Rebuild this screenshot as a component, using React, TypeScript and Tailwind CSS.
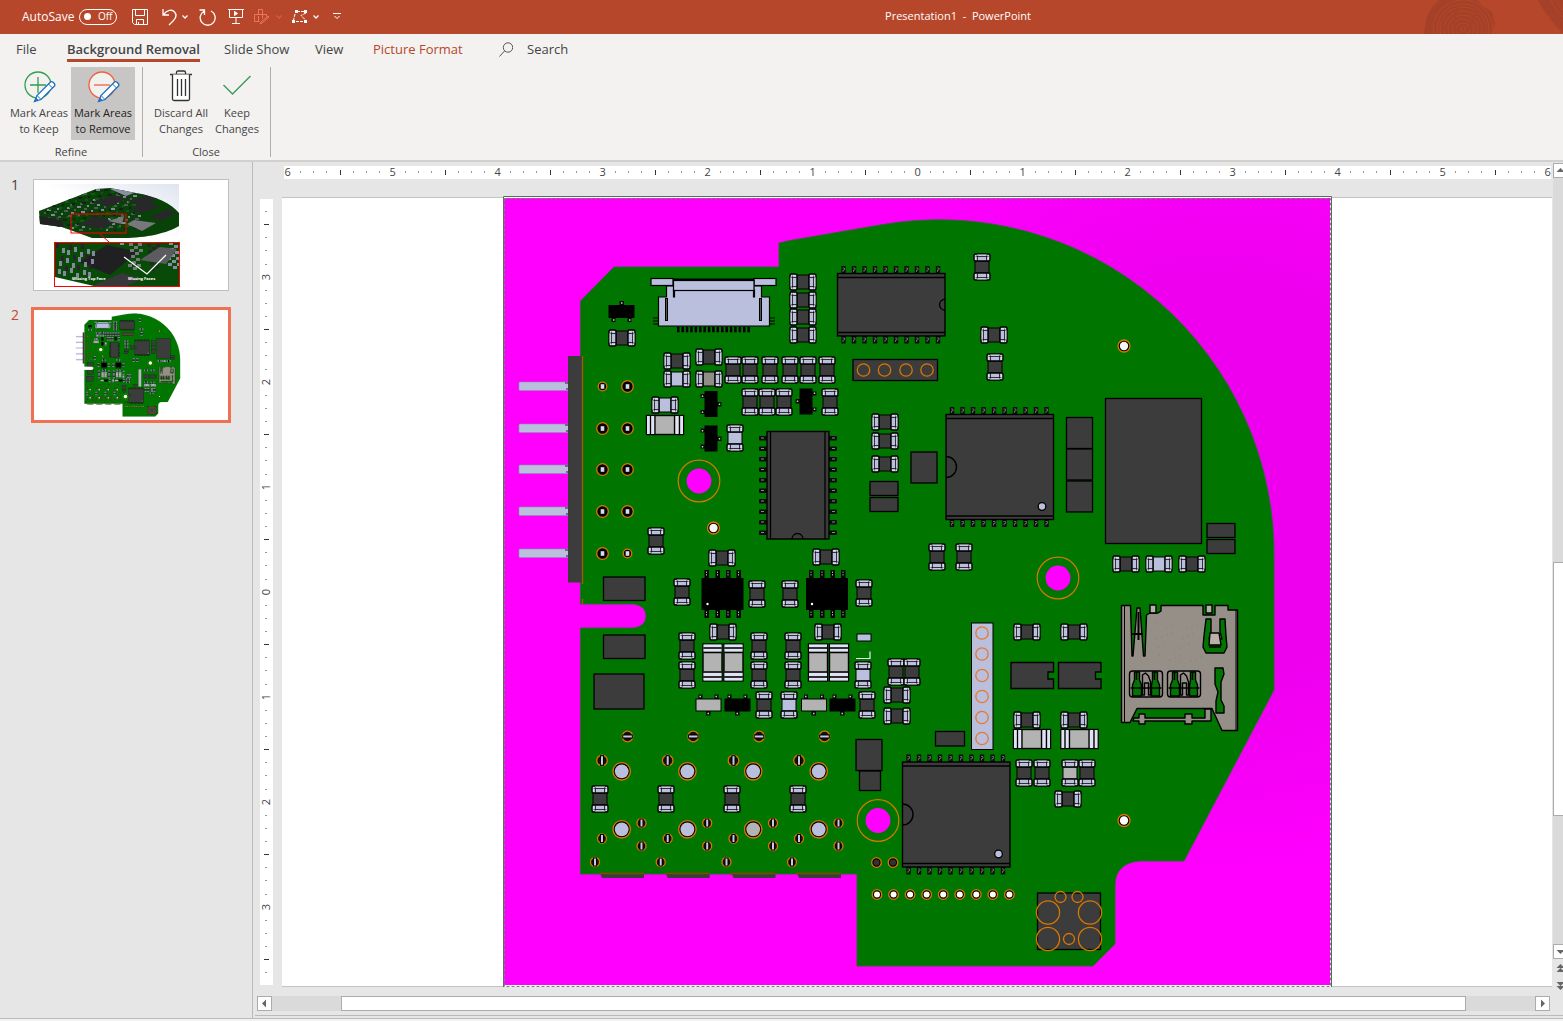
import React from 'react';

type Point = [number, number];

interface PassiveProps {
    x: number;
    y: number;
    vertical?: boolean;
    fill?: string;
}

const DARK = '#3c3c3c';
const PAD = '#b9bfdc';
const GREY = '#b3b3b3';
const ORANGE = '#d97700';
const BOARD = '#007500';

/* ---------- Board parts ---------- */

const horizontalParts: Point[] = [
    [622, 338], [803, 282], [803, 300], [803, 317], [803, 335], [677, 361], [709, 357],
    [994, 335], [885, 422], [885, 441], [885, 464], [722, 558], [826, 557], [723, 632],
    [828, 632], [1126, 564], [1192, 564], [1027, 632], [1074, 632], [897, 695], [897, 716],
    [1027, 720], [1074, 720], [1068, 799],
];

const horizontalLight: Point[] = [[677, 379], [665, 405], [1159, 564]];

const verticalParts: Point[] = [
    [733, 370], [750, 370], [770, 370], [790, 370], [808, 370], [827, 370], [750, 402],
    [767, 402], [784, 402], [830, 402], [982, 267], [995, 367], [656, 541], [682, 592],
    [757, 594], [790, 594], [864, 593], [687, 646], [759, 646], [793, 646], [687, 675],
    [759, 675], [793, 675], [764, 705], [867, 705], [937, 557], [964, 557], [896, 672],
    [912, 672], [1024, 773], [1042, 773], [1087, 773], [600, 799], [666, 799], [732, 799],
    [798, 799],
];

const verticalLight: Point[] = [[735, 438], [863, 675], [789, 705]];

// x, y, width, height
const blocks: [number, number, number, number][] = [
    [1105.5, 398.5, 96, 145], [1066.5, 417.5, 26, 31], [1066.5, 449, 26, 31],
    [1066.5, 481, 26, 31], [911, 452, 26, 31], [870, 481.5, 28, 14], [870, 497.5, 28, 14],
    [1207, 523.5, 28, 14], [1207, 539.5, 28, 14], [603.5, 577, 41.5, 23.5],
    [603.5, 635, 41.5, 23.5], [594, 674, 50, 35], [856, 739.5, 26, 31], [859.5, 771, 21, 19.5],
    [935.5, 731.5, 29, 14.5], [853, 359.5, 84.5, 21], [1037.5, 893, 63, 56.5],
];

const Passive: React.FC<PassiveProps> = ({ x, y, vertical, fill = DARK }) => (
    <g transform={`translate(${x} ${y})${vertical ? ' rotate(90)' : ''}`}>
        <rect x={-6} y={-7} width={12} height={14} fill={fill} stroke="#000" />
        {[-13, 6].map((px) => (
            <g key={px}>
                <rect x={px} y={-8} width={7} height={16} rx={1.5} fill={PAD} stroke="#000" strokeWidth={1.4} />
                <path d={`M${px + (px < 0 ? 2.4 : 4.6)} -7v14M${px} -4.6h7M${px} 4.6h7`} stroke="#111" strokeWidth={0.9} />
                <path d={`M${px + 1} -6.2h5M${px + 1} 6.2h5M${px < 0 ? -12 : 12} -5v10`} stroke="#f4f5fd" strokeWidth={0.8} />
            </g>
        ))}
    </g>
);

const BigCap: React.FC<PassiveProps> = ({ x, y, vertical }) => (
    <g transform={`translate(${x} ${y})${vertical ? ' rotate(90)' : ''}`}>
        <rect x={-18.5} y={-9.5} width={37} height={19} fill={GREY} stroke="#000" strokeWidth={1.4} />
        <path d="M-16.5 -9v18M-12.5 -9v18M12 -9v18M16.5 -9v18" stroke="#dfe3f5" strokeWidth={3} />
        <path d="M-14.5 -9v18M-10 -9v18M9.5 -9v18M14.5 -9v18" stroke="#000" strokeWidth={1.3} />
    </g>
);

const PinRow: React.FC<{ x: number; y: number }> = ({ x, y }) => (
    <>
        {Array.from({ length: 10 }, (_, i) => (
            <g key={i}>
                <rect x={x + i * 10.5 - 2.2} y={y} width={4.4} height={7.5} fill="#0c0c0c" />
                <path d={`M${x + i * 10.5 - 1} ${y + 2}h2v2h-1.5v2`} fill="none" stroke="#888" strokeWidth={0.7} />
            </g>
        ))}
    </>
);

const WideChip: React.FC<{ x: number; y: number; h: number; dot?: Point }> = ({ x, y, h, dot }) => (
    <g>
        <PinRow x={x + 6} y={y - 7.5} />
        <PinRow x={x + 6} y={y + h} />
        <rect x={x} y={y} width={107.5} height={h} fill={DARK} stroke="#000" strokeWidth={1.4} />
        <path d={`M${x} ${y + 4}h107.5M${x} ${y + h - 3.5}h107.5`} stroke="#000" strokeWidth={1.3} />
        {dot ? (
            <>
                <path d={`M${x} ${y + h / 2 - 10.5}a10.5 10.5 0 0 1 0 21`} fill="none" stroke="#000" strokeWidth={1.4} />
                <circle cx={dot[0]} cy={dot[1]} r={3.8} fill={PAD} stroke="#000" strokeWidth={1.3} />
            </>
        ) : (
            <path d={`M${x + 107.5} ${y + h / 2 - 5.5}a5.5 5.5 0 0 0 0 11`} fill="none" stroke="#000" strokeWidth={1.3} />
        )}
    </g>
);

const TallChip = () => (
    <g>
        {Array.from({ length: 10 }, (_, i) => (
            <g key={i}>
                <rect x={759} y={436 + i * 10.5} width={8} height={4.4} rx={1} fill="#0c0c0c" />
                <rect x={829} y={436 + i * 10.5} width={8} height={4.4} rx={1} fill="#0c0c0c" />
                <path d={`M761 ${438 + i * 10.5}h3M832 ${438 + i * 10.5}h3`} stroke="#888" />
            </g>
        ))}
        <rect x={767} y={431.5} width={62} height={107.5} fill={DARK} stroke="#000" strokeWidth={1.4} />
        <path d="M770.5 432v107M825 432v107M792 539a5.5 5.5 0 0 1 11 0" fill="none" stroke="#000" strokeWidth={1.3} />
    </g>
);

const DriverChip: React.FC<{ x: number }> = ({ x }) => (
    <g>
        {[5, 16, 26.5, 37].map((dx) => (
            <g key={dx}>
                <rect x={x + dx - 2} y={570} width={4.5} height={8} fill="#050505" />
                <rect x={x + dx - 2} y={610} width={4.5} height={8} fill="#050505" />
                <path d={`M${x + dx} 571.5v5M${x + dx} 611.5v5`} stroke="#aaa" strokeDasharray="1.5 1" />
            </g>
        ))}
        <rect x={x} y={578} width={42} height={32} fill="#000" />
        <circle cx={x + 6} cy={604} r={1.2} fill="#fff" />
    </g>
);

const Transistor: React.FC<{ x: number; y: number; turn: number; fill?: string }> = ({ x, y, turn, fill = '#000' }) => (
    <g transform={`translate(${x} ${y}) rotate(${turn})`}>
        <rect x={-2} y={-10.5} width={4.5} height={5} fill="#0a0a0a" />
        <rect x={-10} y={5} width={4} height={5.5} fill="#0a0a0a" />
        <rect x={6} y={5} width={4} height={5.5} fill="#0a0a0a" />
        <path d="M-.5 -8.5h1.5M-8.5 8.5h1.5M7.5 8.5h1.5" stroke="#ccc" strokeWidth={1.4} />
        <rect x={-12.5} y={-6} width={25} height={12} fill={fill} stroke="#000" />
    </g>
);

const Via: React.FC<{ x: number; y: number; r: number; fill: string }> = ({ x, y, r, fill }) => (
    <g>
        <circle cx={x} cy={y} r={r} fill="#000" stroke={ORANGE} strokeWidth={1.3} />
        <circle cx={x} cy={y} r={r - 1.8} fill={fill} />
    </g>
);

const SlotVia: React.FC<{ x: number; y: number; r?: number; flat?: boolean }> = ({ x, y, r = 4.5, flat }) => (
    <g transform={`translate(${x} ${y})${flat ? ' rotate(90)' : ''}`}>
        <circle r={r} fill="#101010" stroke={ORANGE} strokeWidth={1.3} />
        <path d={`M0 ${-r}v${r * 2}`} stroke="#000" strokeWidth={4} />
        <path d={`M0 ${1 - r}v${r * 2 - 2}`} stroke="#c5c9e2" strokeWidth={2} />
    </g>
);

const RibbonConnector = () => (
    <g stroke="#000" strokeWidth={1.2}>
        <path d="M677 329.5h74" strokeWidth={5.5} strokeDasharray="2.5 1.9" />
        <path d="M653 318h8v6h-8M775 318h-8v6h8M653 321h8M767 321h8" fill="none" />
        <path d="M658.5 326V297h8v-11h8v11h-1v-7h81v7h-1v-11h8v11h8v29z" fill={PAD} />
        <rect x={651} y={278.5} width={22} height={7} fill={PAD} />
        <rect x={754} y={278.5} width={22} height={7} fill={PAD} />
        <rect x={673.5} y={280.5} width={80.5} height={10} fill={PAD} />
        <path d="M673 279.5h81" strokeWidth={2} />
        <path d="M666.5 298v23M760.5 298v23" strokeWidth={3} />
        <path d="M666.5 299v21M760.5 299v21" stroke="#555" strokeWidth={1} />
    </g>
);

const CardSocket = () => (
    <g stroke="#000" strokeWidth={1.4} strokeLinejoin="round">
        <path
            fill="#968f88"
            d="M1121.5 605.5H1130.5L1132 656H1133L1137 608H1140L1143.5 656H1145L1146.5 615 1150 613H1158L1161 611V605.5H1203V615H1215V605.5H1228V610H1237.5V730.5H1222L1212 708.5H1137L1130 722.5H1121.5Z"
        />
        <path d="M1124.5 606v116M1236 610v120" strokeWidth={1} />
        <path d="M1134 718h5v-4h6v4h40v-4h7v4h13v-9h6v12h-19v3h-7v-3h-40v3h-6v-3h-6z" fill="#968f88" />
        <path d="M1138.5 612v28M1132 634h11" fill="none" strokeWidth={2} />
        <path d="M1150 605h6v8h-6zM1206 605h6v8h-6z" fill="#b8b2a8" />
        <path d="M1206 619h5v13l-2 7h13l-2-7v-13h5l1 17 1 11-3 6h-18l-3-6 1-11z" fill={BOARD} />
        <path d="M1210 633h9l2 12h-12zM1209 647h12" fill="#b8b2a8" />
        <path d="M1215 668h8l1 6-3 8v18l3 6v7h-8v-12l2-9-3-8z" fill={BOARD} />
        {[1129.5, 1167.5].map((x) => (
            <g key={x} transform={`translate(${x} 671)`}>
                <rect width={33} height={26} rx={3} fill="#968f88" />
                <path d="M5 1h5v8l2 5v11H3V14l2-5zM23 1h5v8l2 5v11h-8V14l1-5z" fill={BOARD} />
                <path d="M13 4l3-2 3 3 2 6v13h-2V12h-4v12h-2zM1 17h31M7 1v8M25 1v8" fill="none" />
            </g>
        ))}
        {Array.from({ length: 28 }, (_, i) => (
            <circle key={i} cx={1155 + ((i * 17) % 47)} cy={622 + ((i * 11) % 43)} r={0.5} fill="#777" stroke="none" />
        ))}
    </g>
);

const Board: React.FC<{ hole?: string }> = ({ hole = '#f0f' }) => (
    <g>
        <path
            fill={BOARD}
            stroke="#35613b"
            strokeWidth={1}
            d="M580.5 301 614 267H779V243L790 240.5 880 225A335 335 0 0 1 1274 562V690L1184 861H1140Q1115 863 1115 886V944L1093 966H857V874H580.5V628H634Q646 626 646 616T634 604H580.5Z"
        />

        {/* Pin header on the left edge */}
        {[386, 428, 469, 511, 553].map((y) => (
            <g key={y}>
                <rect x={519} y={y - 4} width={50} height={8.5} rx={1} fill={PAD} stroke="#8a8fb0" strokeWidth={0.6} />
                <path d={`M565 ${y - 3}h4v6h-3`} fill="none" stroke="#222" />
                {[602.5, 627.5].map((x) => {
                    const small = (y === 386 && x < 610) || (y === 553 && x > 610);
                    return (
                        <g key={x}>
                            <circle cx={x} cy={y + 0.5} r={small ? 4.3 : 5.8} fill="#000" stroke={ORANGE} strokeWidth={1.3} />
                            <rect x={x - 1.8} y={y - 1.8} width={3.6} height={4.6} fill="#d9dcef" />
                        </g>
                    );
                })}
            </g>
        ))}
        <rect x={568} y={356} width={14} height={226.5} fill={DARK} />
        <path d="M582.5 356v228M582.5 599v5" stroke="#a85a00" strokeWidth={1.3} />

        {blocks.map(([x, y, w, h]) => (
            <rect key={`${x}-${y}`} x={x} y={y} width={w} height={h} fill={DARK} stroke="#000" strokeWidth={1.3} />
        ))}
        {[1011, 1058.5].map((x) => (
            <path
                key={x}
                d={`M${x} 662.5h42.5v9.5h-5.5v7h5.5v9.5h-42.5z`}
                fill={DARK}
                stroke="#000"
                strokeWidth={1.3}
            />
        ))}

        <WideChip x={837.5} y={273.5} h={62.5} />
        <WideChip x={946} y={414.5} h={105} dot={[1042, 506.5]} />
        <WideChip x={902.5} y={762} h={105} dot={[998.5, 854]} />
        <TallChip />
        <DriverChip x={701.5} />
        <DriverChip x={806} />
        <RibbonConnector />
        <CardSocket />

        {horizontalParts.map(([x, y]) => <Passive key={`h${x}-${y}`} x={x} y={y} />)}
        {horizontalLight.map(([x, y]) => <Passive key={`hl${x}-${y}`} x={x} y={y} fill={PAD} />)}
        {verticalParts.map(([x, y]) => <Passive key={`v${x}-${y}`} x={x} y={y} vertical />)}
        {verticalLight.map(([x, y]) => <Passive key={`vl${x}-${y}`} x={x} y={y} vertical fill={PAD} />)}
        <Passive x={709} y={379} fill="#8f8f88" />
        <Passive x={1070} y={773} vertical fill={GREY} />
        <rect x={857} y={634} width={14} height={7} fill={PAD} stroke="#000" />
        <path d="M856 658.5h14v-7" fill="none" stroke="#e9ebf7" strokeWidth={1.2} />

        <BigCap x={665} y={425} />
        <BigCap x={1032} y={739} />
        <BigCap x={1079.5} y={739} />
        <BigCap x={712.5} y={662.5} vertical />
        <BigCap x={733.5} y={662.5} vertical />
        <BigCap x={818} y={662.5} vertical />
        <BigCap x={839} y={662.5} vertical />

        <Transistor x={621.5} y={311.5} turn={0} />
        <Transistor x={711} y={404} turn={90} />
        <Transistor x={711} y={438.5} turn={90} />
        <Transistor x={806} y={401.5} turn={-90} />
        <Transistor x={708.5} y={705} turn={180} fill={GREY} />
        <Transistor x={737.5} y={705} turn={180} />
        <Transistor x={814} y={705} turn={180} fill={GREY} />
        <Transistor x={842.5} y={705} turn={180} />

        <rect x={971.5} y={623} width={21.5} height={126.5} fill={PAD} stroke="#000" />
        <g fill="none" stroke="#e8782a" strokeWidth={1.3}>
            {[633, 654, 675.5, 696.5, 717.5, 738.5].map((y) => <circle key={y} cx={982} cy={y} r={6.2} />)}
        </g>
        <g fill="none" stroke={ORANGE} strokeWidth={1.3}>
            {[863.5, 884.5, 906, 927].map((x) => <circle key={x} cx={x} cy={370} r={6.2} />)}
            {[1048, 1090].map((x) => (
                <g key={x}>
                    <circle cx={x} cy={912.5} r={11.6} />
                    <circle cx={x} cy={939} r={11.6} />
                </g>
            ))}
            <circle cx={1060.5} cy={897} r={5.5} />
            <circle cx={1077.5} cy={897} r={5.5} />
            <circle cx={1069} cy={939} r={5.5} />
        </g>

        {/* Mounting holes */}
        {[[699, 481], [1058, 578], [878, 820.5]].map(([x, y]) => (
            <g key={x}>
                <circle cx={x} cy={y} r={20.8} fill="none" stroke={ORANGE} strokeWidth={1.2} />
                <circle cx={x} cy={y} r={12.4} fill={hole} />
            </g>
        ))}

        <Via x={1124} y={346} r={6} fill="#f4f4f4" />
        <Via x={713.5} y={528} r={6} fill="#f4f4f4" />
        <Via x={1124} y={820.5} r={6} fill="#fff" />
        <Via x={876.5} y={862.5} r={4.8} fill="#333" />
        <Via x={893} y={862.5} r={4.8} fill="#333" />
        {Array.from({ length: 9 }, (_, i) => <Via key={i} x={877 + i * 16.55} y={894.5} r={4.8} fill="#fff" />)}

        {[0, 65.7, 131.5, 197].map((dx) => (
            <g key={dx}>
                <SlotVia x={627.5 + dx} y={736.5} r={5.3} flat />
                <SlotVia x={602 + dx} y={760.5} r={5.3} />
                <Via x={621.7 + dx} y={771.3} r={8.7} fill={PAD} />
                <Via x={621.7 + dx} y={829.3} r={8.7} fill={dx === 131.5 ? GREY : PAD} />
                <SlotVia x={641.5 + dx} y={823} />
                <SlotVia x={602 + dx} y={838.5} />
                <SlotVia x={641.5 + dx} y={846} />
                <SlotVia x={595 + dx} y={862} />
                <path d={`M${600 + dx} 873h44v5h-42z`} fill={DARK} />
                <path d={`M${599 + dx} 873.5h45`} stroke="#8a4400" strokeWidth={1.5} />
            </g>
        ))}
    </g>
);

/* ---------- Thumbnail of the first slide ---------- */

const IsoBoard = () => (
    <svg viewBox="0 0 194 110" className="block h-full w-full" aria-hidden="true">
        <defs>
            <clipPath id="iso-shape">
                <path d="M5 31 62 9 76 8 102 13C122 16 138 24 145 33V46C134 53 112 58 90 58H58L28 47 6 44Z" />
            </clipPath>
            <clipPath id="iso-zoom">
                <path d="M21 62H145V106H60L21 97Z" />
            </clipPath>
            <linearGradient id="iso-sky" x1="0" y1="1" x2="1" y2="0">
                <stop offset="0.5" stopColor="#fff" />
                <stop offset="1" stopColor="#dfe4ef" />
            </linearGradient>
        </defs>
        <rect x={5} y={4} width={140} height={57} fill="url(#iso-sky)" />
        <g clipPath="url(#iso-shape)">
            <rect width={194} height={110} fill="#084208" />
            {Array.from({ length: 190 }, (_, i) => (
                <rect
                    key={i}
                    x={8 + ((i * 37) % 97)}
                    y={9 + ((i * 23) % 41)}
                    width={2 + (i % 3)}
                    height={2}
                    fill={['#85869a', '#1c1c1f', '#55565f', '#0b5c0b'][i % 4]}
                />
            ))}
            <path d="M5 36 28 40 30 50 5 46Z" fill="#222" />
            <path d="M60 21 80 15 93 19 74 27ZM93 22 112 15 123 19 106 26ZM96 29 114 22 125 27 108 33ZM46 44 62 36 82 42 66 49ZM116 37 134 29 142 33 126 41Z" fill="#28282b" />
            <path d="M76 9 88 7 100 13 92 16Z" fill="#8b8da5" />
            <path d="M93 44 100 40 122 43 108 51ZM74 41 90 36 88 44Z" fill="#77777c" />
        </g>
        <rect x={37} y={34} width={55} height={19} fill="none" stroke="#f00" />
        <path d="M66 54 75 62" stroke="#f00" />
        <g clipPath="url(#iso-zoom)">
            <rect x={21} y={62} width={124} height={45} fill="#084b08" />
            <path d="M45 82 73 65 104 72 76 95Z" fill="#202022" />
            {Array.from({ length: 27 }, (_, i) => (
                <rect
                    key={i}
                    x={22 + ((i * 11) % 37)}
                    y={63 + ((i * 7) % 31)}
                    width={3}
                    height={5}
                    fill={i % 3 ? '#85889c' : '#262629'}
                />
            ))}
            {Array.from({ length: 36 }, (_, i) => (
                <rect
                    key={i}
                    x={86 + ((i * 19) % 58)}
                    y={62 + ((i * 7) % 27)}
                    width={4}
                    height={3}
                    fill={['#898ca3', '#77777f', '#262629'][i % 3]}
                />
            ))}
            <path d="M106 80 126 67 143 69 132 84Z" fill="#5c5c60" />
            <path d="M58 106 88 93 108 99 90 107Z" fill="#38383b" />
        </g>
        <rect x={20.5} y={62.5} width={125} height={44} fill="none" stroke="#f00" />
        <path d="M90 77 113 94 132 75" fill="none" stroke="#fff" strokeWidth={1.2} />
        <g fill="#fff" fontSize={4} fontWeight={700}>
            <text x={38} y={99.5}>Missing Top Face</text>
            <text x={94} y={99.5}>Missing Faces</text>
        </g>
    </svg>
);

/* ---------- Toolbar icons ---------- */

const SaveIcon = () => (
    <svg width={16} height={16} viewBox="0 0 16 16" fill="none" stroke="#fff" aria-hidden="true">
        <path d="M.5 .5h15v15H2.5l-2-2zM3.5 .5v6h9v-6M4.5 15.5v-5h7v5M6.5 13v2.5" />
    </svg>
);

const UndoIcon = () => (
    <svg width={16} height={18} viewBox="0 0 16 18" fill="none" stroke="#fff" strokeWidth={1.3} aria-hidden="true">
        <path d="M1 1v6h6M1.5 6.5C5 2 10 1 12.5 4s1.5 6-1 8.5L7 17" />
    </svg>
);

const RedoIcon = () => (
    <svg width={18} height={18} viewBox="0 0 18 18" fill="none" stroke="#fff" strokeWidth={1.3} aria-hidden="true">
        <path d="M6 3.2A7.5 7.5 0 1 0 13 3M1.5 2h5v5" />
    </svg>
);

const ShowIcon = () => (
    <svg width={16} height={17} viewBox="0 0 16 17" fill="none" stroke="#fff" aria-hidden="true">
        <path d="M0 1.5h16M1.5 1.5v8h13v-8M8 9.5v6M4 15.5h8" />
        <path d="M6.5 3.5v4l3-2z" fill="#fff" />
    </svg>
);

const InkIcon = () => (
    <svg width={16} height={16} viewBox="0 0 16 16" fill="none" stroke="#f0745a" aria-hidden="true">
        <path d="M4.5 5.5V.5h4v9M.5 12.5v-7h8M8.5 5.5h4v2M.5 12.5h5M4.5 7v5M7 13l7-6 1 1-7 6-2 1z" />
    </svg>
);

const PointsIcon = () => (
    <svg width={17} height={15} viewBox="0 0 17 15" fill="none" stroke="#fff" aria-hidden="true">
        <path d="M5 2.5h7M3 5 1.5 11M4 12.5h9M14 4 9 6.5l5 5" strokeDasharray="3 1" />
        <path d="M3 1h3v3H3zM12 1h3v3h-3zM0 11h3v3H0zM12 11h3v3h-3z" fill="#fff" stroke="none" />
    </svg>
);

const Chevron: React.FC<{ color?: string }> = ({ color = '#fff' }) => (
    <svg width={6} height={4} viewBox="0 0 6 4" fill="none" stroke={color} strokeWidth={1.3} aria-hidden="true">
        <path d="M.5 .5 3 3 5.5 .5" />
    </svg>
);

const Pencil = () => (
    <>
        <path d="M9.5 31.5 12 25.5 25.5 12C27 10.5 31 14 29.5 16L16 29.5Z" fill="#fff" stroke="#1e6fbe" strokeWidth={1.3} />
        <path d="M23.5 14 27.5 18M12 25.5l4 4" stroke="#1e6fbe" />
        <path d="M9.5 31.5 11 27.5l2.5 2.5z" fill="#1e6fbe" />
    </>
);

const MarkIcon: React.FC<{ remove?: boolean }> = ({ remove }) => (
    <svg width={33} height={34} viewBox="-2 0 33 34" fill="none" aria-hidden="true">
        <circle cx={13} cy={15} r={13} fill={remove ? '#fff' : 'none'} fillOpacity={0.75} stroke={remove ? '#f0623c' : '#2f9e4f'} strokeWidth={1.3} />
        <path d={remove ? 'M5 15h16' : 'M5 15h16M13 7v16'} stroke={remove ? '#f0623c' : '#2f9e4f'} strokeWidth={1.3} />
        <Pencil />
    </svg>
);

const TrashIcon = () => (
    <svg width={24} height={34} viewBox="0 0 24 34" fill="none" stroke="#333" strokeWidth={1.3} aria-hidden="true">
        <path d="M1 4.5h22M7.5 4V2.5Q7.5 1 9 1h6q1.5 0 1.5 1.5V4" />
        <path d="M3.5 4.5V29q0 1.5 1.5 1.5h14q1.5 0 1.5-1.5V4.5" fill="#fff" />
        <path d="M8.5 9v17M12.5 9v17M16.5 9v17" />
    </svg>
);

const CheckIcon = () => (
    <svg width={30} height={34} viewBox="0 0 30 34" fill="none" stroke="#3d9a58" strokeWidth={1.4} aria-hidden="true">
        <path d="M1.5 15 10.5 24 28.5 6" />
    </svg>
);

const WoodGrain = () => (
    <svg width={140} height={34} viewBox="0 0 140 34" fill="none" stroke="#a54128" aria-hidden="true">
        <path d="M1 34 2 26 4 16 10 6 16 0H54L60 6 69 12 72 24 68 34Z" fill="#a54128" stroke="none" />
        <g stroke="#b7472a">
            {[3, 7, 11, 15, 19, 23, 26, 30].map((r) => (
                <ellipse key={r} cx={40} cy={29} rx={r} ry={r - 1} strokeDasharray={r % 2 ? '18 2' : undefined} />
            ))}
        </g>
        <path d="M115 0 122 12 132 25 140 33V0Z" fill="#a54128" stroke="none" />
        <path d="M128 0q4 11 12 17M133 0q3 6 7 10" stroke="#b7472a" />
    </svg>
);

/* ---------- Window parts ---------- */

const TitleBar = () => (
    <header className="flex h-[34px] shrink-0 items-center bg-[#b7472a] pb-px pl-[22px] text-white">
        <span id="autosave" className="w-[57px] whitespace-nowrap">AutoSave</span>
        <button
            type="button"
            role="switch"
            aria-checked="false"
            aria-labelledby="autosave"
            className="mr-[15px] flex h-4 w-[38px] items-center gap-[7px] rounded-full border border-white pl-[4px] text-[10px]"
        >
            <span className="h-[7px] w-[7px] rounded-full bg-white" />
            Off
        </button>
        <button type="button" aria-label="Save" className="mr-3.5"><SaveIcon /></button>
        <button type="button" aria-label="Undo" className="mr-2.5 flex items-center gap-1"><UndoIcon /><Chevron /></button>
        <button type="button" aria-label="Redo" className="mr-3"><RedoIcon /></button>
        <button type="button" aria-label="Start slide show" className="mr-2.5"><ShowIcon /></button>
        <button type="button" aria-label="Ink" disabled className="mr-2.5 flex items-center gap-1.5"><InkIcon /><Chevron color="#e0583a" /></button>
        <button type="button" aria-label="Edit points" className="mr-3.5 flex items-center gap-1"><PointsIcon /><Chevron /></button>
        <button type="button" aria-label="Customize toolbar">
            <svg width={8} height={7} viewBox="0 0 8 7" fill="none" stroke="#fff" aria-hidden="true">
                <path d="M0 .5h8M1.5 3 4 5.5 6.5 3" />
            </svg>
        </button>
        <h1 className="ml-auto text-[11px] whitespace-pre">Presentation1  -  PowerPoint</h1>
        <div className="flex w-[532px] justify-end"><WoodGrain /></div>
    </header>
);

const tabs = [
    { label: 'File', style: 'w-[51px]' },
    { label: 'Background Removal', style: 'w-[157px]', active: true },
    { label: 'Slide Show', style: 'w-[91px]' },
    { label: 'View', style: 'w-[58px]' },
    { label: 'Picture Format', style: 'w-[126px] text-[#b7472a]' },
];

const TabStrip = () => (
    <nav className="flex h-[31px] items-center pl-4 text-[13px]">
        {tabs.map(({ label, style, active }) => (
            <div key={label} className={`flex h-full whitespace-nowrap ${style}`}>
                <button
                    type="button"
                    className={active ? 'mb-[3px] border-b-[3px] border-[#b7472a] pt-[6px] font-semibold' : 'pt-px'}
                >
                    {label}
                </button>
            </div>
        ))}
        <label htmlFor="search" aria-label="Search" className="mr-3.5">
            <svg width={14} height={15} viewBox="0 0 14 15" fill="none" stroke="#555" aria-hidden="true">
                <circle cx={9} cy={5.5} r={4.7} />
                <path d="M5.5 9 .5 14.5" />
            </svg>
        </label>
        <input id="search" type="text" placeholder="Search" className="w-40 bg-transparent pt-px outline-none placeholder:text-[#444]" />
    </nav>
);

interface CommandProps {
    icon: React.ReactNode;
    lines: [string, string];
    width: string;
    active?: boolean;
}

const Command: React.FC<CommandProps> = ({ icon, lines, width, active }) => (
    <button
        type="button"
        aria-pressed={active}
        className={`flex h-[73px] flex-col items-center pt-[3px] text-[11px] leading-4 whitespace-nowrap ${width} ${active ? 'bg-[#c8c6c4] text-[#222]' : ''}`}
    >
        <span className="flex h-[35px] items-start">{icon}</span>
        <span>{lines[0]}</span>
        <span>{lines[1]}</span>
    </button>
);

const Ribbon = () => (
    <div className="flex h-[95px] pt-[2px]">
        <section className="flex h-[90px] w-[143px] flex-col border-r border-[#b1afad] pl-[7px]">
            <div className="flex">
                <Command icon={<MarkIcon />} lines={['Mark Areas', 'to Keep']} width="w-16" />
                <Command icon={<MarkIcon remove />} lines={['Mark Areas', 'to Remove']} width="w-16" active />
            </div>
            <h2 className="w-32 pt-1 text-center text-[11px] leading-4">Refine</h2>
        </section>
        <section className="flex h-[90px] w-[128px] flex-col border-r border-[#b1afad] pl-[6px]">
            <div className="flex">
                <Command icon={<TrashIcon />} lines={['Discard All', 'Changes']} width="w-16" />
                <Command icon={<CheckIcon />} lines={['Keep', 'Changes']} width="w-12" />
            </div>
            <h2 className="w-[114px] pt-1 text-center text-[11px] leading-4">Close</h2>
        </section>
    </div>
);

const SlideList = () => (
    <aside className="w-[253px] shrink-0 border-r border-[#bababa] pt-[17px]">
        <ol className="flex flex-col gap-4 text-[14px]">
            <li className="flex h-[112px] pl-[11px]">
                <span className="w-[22px] leading-3">1</span>
                <button type="button" aria-label="Slide 1" className="w-[196px] border border-[#bfbfbf] bg-white"><IsoBoard /></button>
            </li>
            <li className="flex h-[116px] pl-[11px]">
                <span className="w-5 pt-[2px] leading-3 text-[#c8492a]">2</span>
                <button type="button" aria-label="Slide 2" className="w-[200px] border-[3px] border-[#ee7152] bg-white">
                    <svg viewBox="215 194 1406 797" className="block h-full w-full" aria-hidden="true"><Board hole="#fff" /></svg>
                </button>
            </li>
        </ol>
    </aside>
);

const HorizontalRuler = () => (
    <div className="mt-[4px] mr-[2px] ml-[31px] h-[13px] bg-white">
        <div className="-mx-[3px] flex h-full pb-px">
            {Array.from({ length: 97 }, (_, i) => i - 48).map((n) => (
                <span key={n} className="flex w-0 flex-1 items-center justify-center">
                    {n % 8 === 0 ? Math.abs(n / 8) : <span className={n % 4 === 0 ? 'h-[5px] w-px bg-[#333]' : 'h-[2px] w-px bg-[#999]'} />}
                </span>
            ))}
        </div>
    </div>
);

const VerticalRuler = () => (
    <div className="my-[2px] flex w-[13px] shrink-0 flex-col bg-white py-1.5 pr-px">
        {Array.from({ length: 59 }, (_, i) => i - 29).map((n) => (
            <span key={n} className="flex h-0 flex-1 items-center justify-center">
                {n % 8 === 0 ? <span className="-rotate-90">{Math.abs(n / 8)}</span> : <span className={n % 4 === 0 ? 'h-px w-[5px] bg-[#333]' : 'h-px w-[2px] bg-[#999]'} />}
            </span>
        ))}
    </div>
);

const SlideCanvas = () => (
    <main className="flex min-w-0 flex-1 justify-center border-y border-[#c3c3c3] bg-white">
        <svg viewBox="503 196 829 791" className="-mt-[2px] -mb-px h-[calc(100%+3px)]" role="img" aria-label="Circuit board picture">
            <defs>
                <radialGradient id="removed" gradientUnits="userSpaceOnUse" cx={1220} cy={480} r={400}>
                    <stop offset="0.5" stopColor="#ee00ee" />
                    <stop offset="1" stopColor="#ff00ff" />
                </radialGradient>
            </defs>
            <rect x={503} y={196} width={829} height={791} fill="#fff" />
            <rect x={504} y={198} width={826} height={787} fill="url(#removed)" />
            <path d="M503.5 987V196.5H1331.5V987" fill="none" stroke="#666" />
            <rect x={504.5} y={198.5} width={826} height={788} fill="none" stroke="#6f8a72" strokeDasharray="3 2" />
            <Board />
        </svg>
    </main>
);

const Arrow: React.FC<{ d: string }> = ({ d }) => (
    <svg width={13} height={13} viewBox="0 0 13 13" fill="#666" aria-hidden="true"><path d={d} /></svg>
);

const scrollButton = 'flex h-[15px] w-[15px] shrink-0 items-center justify-center border border-[#ababab] bg-white';

const HorizontalScroll = () => (
    <div className="mt-[9px] mr-[3px] mb-[4px] ml-[4px] flex h-[15px]">
        <button type="button" aria-label="Scroll left" className={scrollButton}><Arrow d="M8 2.5v8L4 6.5z" /></button>
        <div className="flex flex-1 bg-[#dadada]">
            <span className="grow-[69]" />
            <span className="grow-[1125] border border-[#ababab] bg-white" />
            <span className="grow-[69]" />
        </div>
        <button type="button" aria-label="Scroll right" className={scrollButton}><Arrow d="M5 2.5v8l4-4z" /></button>
    </div>
);

const VerticalScroll = () => (
    <div className="w-[10px] shrink-0 overflow-hidden pt-px pb-[23px]">
        <div className="flex h-full w-[15px] flex-col">
            <button type="button" aria-label="Scroll up" className={scrollButton}><Arrow d="M2.5 8h8l-4-4z" /></button>
            <div className="flex flex-1 flex-col bg-[#dadada]">
                <span className="grow-[385]" />
                <span className="grow-[253] border border-[#ababab] bg-white" />
                <span className="grow-[128]" />
            </div>
            <button type="button" aria-label="Scroll down" className={scrollButton}><Arrow d="M2.5 5h8l-4 4z" /></button>
            <button type="button" aria-label="Previous slide" className="mt-[3px] ml-px"><Arrow d="M2.5 6h8l-4-4zM2.5 10h8l-4-4z" /></button>
            <button type="button" aria-label="Next slide" className="mt-[4px] ml-px"><Arrow d="M2.5 3h8l-4 4zM2.5 7h8l-4 4z" /></button>
        </div>
    </div>
);

export default function App() {
    return (
        <div className="flex h-screen flex-col overflow-hidden bg-[#e6e6e6] font-['Open_Sans','Noto_Sans',sans-serif] text-[12px] text-[#444]">
            <TitleBar />
            <div className="shrink-0 border-b-2 border-[#d2d0ce] bg-[#f3f2f1]">
                <TabStrip />
                <Ribbon />
            </div>
            <div className="flex min-h-0 flex-1">
                <SlideList />
                <div className="flex min-w-0 flex-1 flex-col">
                    <div className="flex min-h-0 flex-1">
                        <div className="flex min-w-0 flex-1 flex-col text-[11px] leading-3">
                            <HorizontalRuler />
                            <div className="mt-[18px] mr-px flex min-h-0 flex-1 gap-[9px] pl-[7px]">
                                <VerticalRuler />
                                <SlideCanvas />
                            </div>
                            <HorizontalScroll />
                        </div>
                        <VerticalScroll />
                    </div>
                    <div className="mb-[2px] ml-[2px] h-px bg-[#bababa]" />
                </div>
            </div>
            <footer className="h-[3px] shrink-0 border-t border-[#bababa] bg-[#f3f2f1]" />
        </div>
    );
}
